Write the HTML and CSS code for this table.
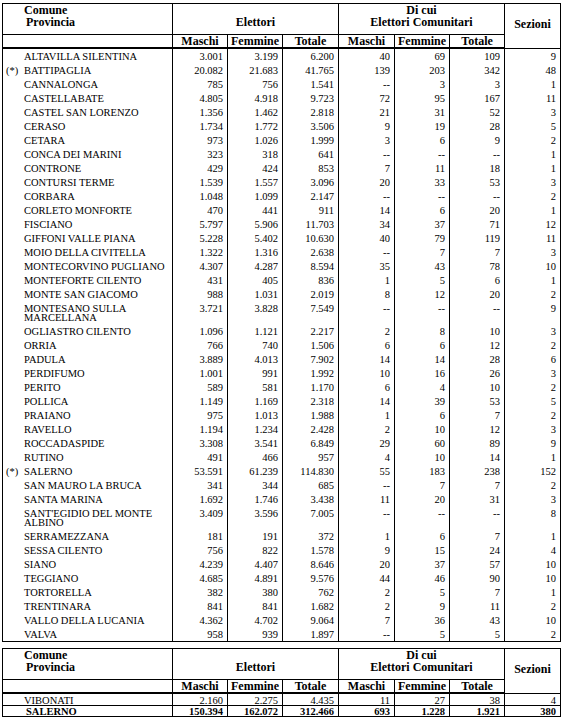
FILE: index.html
```html
<!DOCTYPE html>
<html lang="it">
<head>
<meta charset="utf-8">
<title>Elettori</title>
<link rel="stylesheet" href="styles.css">
</head>
<body>
<div class="page">
<table class="grid">
<colgroup><col class="w-name"><col class="w55"><col class="w55"><col class="w56"><col class="w56"><col class="w55"><col class="w55"><col class="w56"></colgroup>
<thead>
<tr class="h1"><th class="hname">Comune<br><span class="ind">Provincia</span></th><th colspan="3" class="grp">Elettori</th><th colspan="3" class="grp2">Di cui<br>Elettori Comunitari</th><th rowspan="2" class="sez">Sezioni</th></tr>
<tr class="h2"><th class="blank"></th><th>Maschi</th><th>Femmine</th><th>Totale</th><th>Maschi</th><th>Femmine</th><th>Totale</th></tr>
</thead>
<tbody>
<tr><td class="nm"><span class="mk"></span>ALTAVILLA SILENTINA</td><td>3.001</td><td>3.199</td><td>6.200</td><td>40</td><td>69</td><td>109</td><td>9</td></tr>
<tr><td class="nm"><span class="mk">(*)</span>BATTIPAGLIA</td><td>20.082</td><td>21.683</td><td>41.765</td><td>139</td><td>203</td><td>342</td><td>48</td></tr>
<tr><td class="nm"><span class="mk"></span>CANNALONGA</td><td>785</td><td>756</td><td>1.541</td><td>--</td><td>3</td><td>3</td><td>1</td></tr>
<tr><td class="nm"><span class="mk"></span>CASTELLABATE</td><td>4.805</td><td>4.918</td><td>9.723</td><td>72</td><td>95</td><td>167</td><td>11</td></tr>
<tr><td class="nm"><span class="mk"></span>CASTEL SAN LORENZO</td><td>1.356</td><td>1.462</td><td>2.818</td><td>21</td><td>31</td><td>52</td><td>3</td></tr>
<tr><td class="nm"><span class="mk"></span>CERASO</td><td>1.734</td><td>1.772</td><td>3.506</td><td>9</td><td>19</td><td>28</td><td>5</td></tr>
<tr><td class="nm"><span class="mk"></span>CETARA</td><td>973</td><td>1.026</td><td>1.999</td><td>3</td><td>6</td><td>9</td><td>2</td></tr>
<tr><td class="nm"><span class="mk"></span>CONCA DEI MARINI</td><td>323</td><td>318</td><td>641</td><td>--</td><td>--</td><td>--</td><td>1</td></tr>
<tr><td class="nm"><span class="mk"></span>CONTRONE</td><td>429</td><td>424</td><td>853</td><td>7</td><td>11</td><td>18</td><td>1</td></tr>
<tr><td class="nm"><span class="mk"></span>CONTURSI TERME</td><td>1.539</td><td>1.557</td><td>3.096</td><td>20</td><td>33</td><td>53</td><td>3</td></tr>
<tr><td class="nm"><span class="mk"></span>CORBARA</td><td>1.048</td><td>1.099</td><td>2.147</td><td>--</td><td>--</td><td>--</td><td>2</td></tr>
<tr><td class="nm"><span class="mk"></span>CORLETO MONFORTE</td><td>470</td><td>441</td><td>911</td><td>14</td><td>6</td><td>20</td><td>1</td></tr>
<tr><td class="nm"><span class="mk"></span>FISCIANO</td><td>5.797</td><td>5.906</td><td>11.703</td><td>34</td><td>37</td><td>71</td><td>12</td></tr>
<tr><td class="nm"><span class="mk"></span>GIFFONI VALLE PIANA</td><td>5.228</td><td>5.402</td><td>10.630</td><td>40</td><td>79</td><td>119</td><td>11</td></tr>
<tr><td class="nm"><span class="mk"></span>MOIO DELLA CIVITELLA</td><td>1.322</td><td>1.316</td><td>2.638</td><td>--</td><td>7</td><td>7</td><td>3</td></tr>
<tr><td class="nm"><span class="mk"></span>MONTECORVINO PUGLIANO</td><td>4.307</td><td>4.287</td><td>8.594</td><td>35</td><td>43</td><td>78</td><td>10</td></tr>
<tr><td class="nm"><span class="mk"></span>MONTEFORTE CILENTO</td><td>431</td><td>405</td><td>836</td><td>1</td><td>5</td><td>6</td><td>1</td></tr>
<tr><td class="nm"><span class="mk"></span>MONTE SAN GIACOMO</td><td>988</td><td>1.031</td><td>2.019</td><td>8</td><td>12</td><td>20</td><td>2</td></tr>
<tr><td class="nm"><span class="mk"></span><span class="two">MONTESANO SULLA<br>MARCELLANA</span></td><td>3.721</td><td>3.828</td><td>7.549</td><td>--</td><td>--</td><td>--</td><td>9</td></tr>
<tr><td class="nm"><span class="mk"></span>OGLIASTRO CILENTO</td><td>1.096</td><td>1.121</td><td>2.217</td><td>2</td><td>8</td><td>10</td><td>3</td></tr>
<tr><td class="nm"><span class="mk"></span>ORRIA</td><td>766</td><td>740</td><td>1.506</td><td>6</td><td>6</td><td>12</td><td>2</td></tr>
<tr><td class="nm"><span class="mk"></span>PADULA</td><td>3.889</td><td>4.013</td><td>7.902</td><td>14</td><td>14</td><td>28</td><td>6</td></tr>
<tr><td class="nm"><span class="mk"></span>PERDIFUMO</td><td>1.001</td><td>991</td><td>1.992</td><td>10</td><td>16</td><td>26</td><td>3</td></tr>
<tr><td class="nm"><span class="mk"></span>PERITO</td><td>589</td><td>581</td><td>1.170</td><td>6</td><td>4</td><td>10</td><td>2</td></tr>
<tr><td class="nm"><span class="mk"></span>POLLICA</td><td>1.149</td><td>1.169</td><td>2.318</td><td>14</td><td>39</td><td>53</td><td>5</td></tr>
<tr><td class="nm"><span class="mk"></span>PRAIANO</td><td>975</td><td>1.013</td><td>1.988</td><td>1</td><td>6</td><td>7</td><td>2</td></tr>
<tr><td class="nm"><span class="mk"></span>RAVELLO</td><td>1.194</td><td>1.234</td><td>2.428</td><td>2</td><td>10</td><td>12</td><td>3</td></tr>
<tr><td class="nm"><span class="mk"></span>ROCCADASPIDE</td><td>3.308</td><td>3.541</td><td>6.849</td><td>29</td><td>60</td><td>89</td><td>9</td></tr>
<tr><td class="nm"><span class="mk"></span>RUTINO</td><td>491</td><td>466</td><td>957</td><td>4</td><td>10</td><td>14</td><td>1</td></tr>
<tr><td class="nm"><span class="mk">(*)</span>SALERNO</td><td>53.591</td><td>61.239</td><td>114.830</td><td>55</td><td>183</td><td>238</td><td>152</td></tr>
<tr><td class="nm"><span class="mk"></span>SAN MAURO LA BRUCA</td><td>341</td><td>344</td><td>685</td><td>--</td><td>7</td><td>7</td><td>2</td></tr>
<tr><td class="nm"><span class="mk"></span>SANTA MARINA</td><td>1.692</td><td>1.746</td><td>3.438</td><td>11</td><td>20</td><td>31</td><td>3</td></tr>
<tr><td class="nm"><span class="mk"></span><span class="two">SANT'EGIDIO DEL MONTE<br>ALBINO</span></td><td>3.409</td><td>3.596</td><td>7.005</td><td>--</td><td>--</td><td>--</td><td>8</td></tr>
<tr><td class="nm"><span class="mk"></span>SERRAMEZZANA</td><td>181</td><td>191</td><td>372</td><td>1</td><td>6</td><td>7</td><td>1</td></tr>
<tr><td class="nm"><span class="mk"></span>SESSA CILENTO</td><td>756</td><td>822</td><td>1.578</td><td>9</td><td>15</td><td>24</td><td>4</td></tr>
<tr><td class="nm"><span class="mk"></span>SIANO</td><td>4.239</td><td>4.407</td><td>8.646</td><td>20</td><td>37</td><td>57</td><td>10</td></tr>
<tr><td class="nm"><span class="mk"></span>TEGGIANO</td><td>4.685</td><td>4.891</td><td>9.576</td><td>44</td><td>46</td><td>90</td><td>10</td></tr>
<tr><td class="nm"><span class="mk"></span>TORTORELLA</td><td>382</td><td>380</td><td>762</td><td>2</td><td>5</td><td>7</td><td>1</td></tr>
<tr><td class="nm"><span class="mk"></span>TRENTINARA</td><td>841</td><td>841</td><td>1.682</td><td>2</td><td>9</td><td>11</td><td>2</td></tr>
<tr><td class="nm"><span class="mk"></span>VALLO DELLA LUCANIA</td><td>4.362</td><td>4.702</td><td>9.064</td><td>7</td><td>36</td><td>43</td><td>10</td></tr>
<tr><td class="nm"><span class="mk"></span>VALVA</td><td>958</td><td>939</td><td>1.897</td><td>--</td><td>5</td><td>5</td><td>2</td></tr>
</tbody>
</table>

<table class="grid second">
<colgroup><col class="w-name"><col class="w55"><col class="w55"><col class="w56"><col class="w56"><col class="w55"><col class="w55"><col class="w56"></colgroup>
<thead>
<tr class="h1"><th class="hname">Comune<br><span class="ind">Provincia</span></th><th colspan="3" class="grp">Elettori</th><th colspan="3" class="grp2">Di cui<br>Elettori Comunitari</th><th rowspan="2" class="sez">Sezioni</th></tr>
<tr class="h2"><th class="blank"></th><th>Maschi</th><th>Femmine</th><th>Totale</th><th>Maschi</th><th>Femmine</th><th>Totale</th></tr>
</thead>
<tbody>
<tr class="last"><td class="nm"><span class="mk"></span>VIBONATI</td><td>2.160</td><td>2.275</td><td>4.435</td><td>11</td><td>27</td><td>38</td><td>4</td></tr>
<tr class="total"><td class="nm"><span class="mk"></span><span class="ind">SALERNO</span></td><td>150.394</td><td>162.072</td><td>312.466</td><td>693</td><td>1.228</td><td>1.921</td><td>380</td></tr>
</tbody>
</table>
</div>
</body>
</html>
```
FILE: styles.css
```css
html, body {
  margin: 0;
  padding: 0;
  background: #ffffff;
}
.page {
  padding: 3px 2px 0 2px;
  font-family: "Liberation Serif", "Times New Roman", serif;
  color: #000000;
}
.grid {
  width: 558px;
  table-layout: fixed;
  border-collapse: collapse;
  border: 1px solid #000;
  font-family: "Liberation Serif", "Times New Roman", serif;
}
.second {
  margin-top: 6px;
}
.w-name { width: 170px; }
.w55 { width: 55px; }
.w56 { width: 56px; }

.grid th {
  font-family: "Liberation Serif", "Times New Roman", serif;
  font-weight: bold;
  font-size: 12px;
  line-height: 12px;
  border: 1px solid #000;
  padding: 0;
}
.h1 {
  height: 31px;
}
.hname {
  text-align: left;
  vertical-align: top;
  padding: 0 0 0 21px !important;
}
.ind {
  padding-left: 2px;
}
.grp {
  vertical-align: top;
  padding-top: 12px !important;
}
.grp2 {
  vertical-align: top;
  padding-top: 0 !important;
}
.sez {
  vertical-align: middle;
  padding-bottom: 4px !important;
}
.h2 {
  height: 13px;
}
.h2 th {
  border-bottom: 2px solid #000;
}

.grid td {
  font-family: "Liberation Serif", "Times New Roman", serif;
  font-size: 10.5px;
  line-height: 9px;
  padding: 3px 4px 2px 0;
  text-align: right;
  vertical-align: top;
  border-left: 1px solid #000;
  border-right: 1px solid #000;
  white-space: nowrap;
}
.grid td.nm {
  text-align: left;
  padding-left: 3px;
}
.mk {
  display: inline-block;
  width: 18px;
  vertical-align: top;
}
.two {
  display: inline-block;
  vertical-align: top;
}
.last td {
  border-bottom: 1px solid #000;
  padding-top: 2px;
  padding-bottom: 0;
}
.total td {
  font-weight: bold;
  padding-top: 1px;
  padding-bottom: 0;
}
```
